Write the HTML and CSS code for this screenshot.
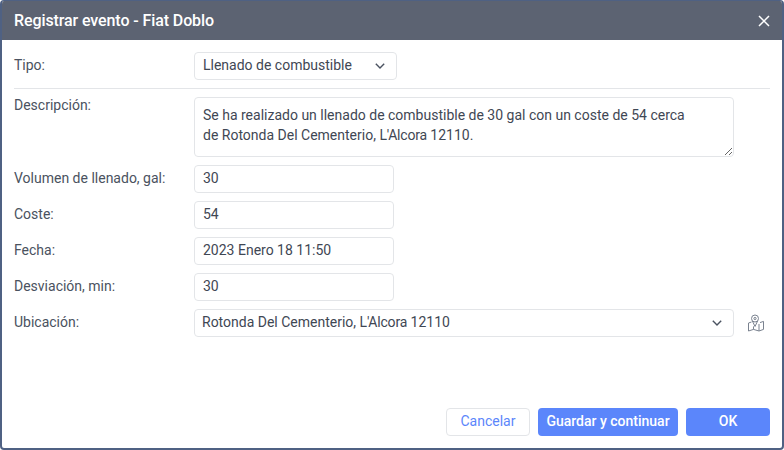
FILE: index.html
```html
<!DOCTYPE html>
<html lang="es">
<head>
<meta charset="utf-8">
<title>Registrar evento</title>
<link rel="stylesheet" href="styles.css">
</head>
<body>
<div class="dialog">
  <header class="head">
    <span class="title">Registrar evento - Fiat Doblo</span>
    <svg class="close" width="12" height="12" viewBox="0 0 12 12"><path d="M1 1l10 10M11 1L1 11" stroke="#fff" stroke-width="1.5" fill="none"/></svg>
  </header>
  <div class="body">
    <div class="row type-row">
      <label class="lab">Tipo:</label>
      <div class="field select type-select"><span>Llenado de combustible</span>
        <svg class="chev" width="10" height="6" viewBox="0 0 10 6"><path d="M.8.8L5 5l4.2-4.2" stroke="#4a5260" stroke-width="1.4" fill="none"/></svg>
      </div>
    </div>
    <hr class="sep">
    <div class="rows">
      <div class="row desc-row">
        <label class="lab">Descripción:</label>
        <div class="field area">
          <div>Se ha realizado un llenado de combustible de 30 gal con un coste de 54 cerca</div>
          <div>de Rotonda Del Cementerio, <span class="kern">L'Alcora</span> 12110.</div>
        </div>
      </div>
      <div class="row"><label class="lab">Volumen de llenado, gal:</label><input class="field input" value="30"></div>
      <div class="row"><label class="lab">Coste:</label><input class="field input" value="54"></div>
      <div class="row"><label class="lab">Fecha:</label><input class="field input" value="2023 Enero 18 11:50"></div>
      <div class="row"><label class="lab">Desviación, min:</label><input class="field input" value="30"></div>
      <div class="row">
        <label class="lab">Ubicación:</label>
        <div class="field select loc-select"><span>Rotonda Del Cementerio, <span class="kern">L'Alcora</span> 12110</span>
          <svg class="chev" width="10" height="6" viewBox="0 0 10 6"><path d="M.8.8L5 5l4.2-4.2" stroke="#4a5260" stroke-width="1.4" fill="none"/></svg>
        </div>
        <svg class="map" width="18" height="18" viewBox="0 0 18 18" fill="none" stroke="#7a828f" stroke-width="1">
          <circle cx="8" cy="4.500" r="3.500"/><circle cx="8" cy="4.500" r="1.100"/>
          <path d="M5.400 7L8 12.500 10.600 7"/>
          <path d="M4.500 8L1.500 9v8l5-1.600 5.500 1.600 4.500-1.600V7.400l-3.500 1.200M6.500 15.400v-3M12 17V10"/>
        </svg>
      </div>
    </div>
    <footer class="foot">
      <button class="btn ghost">Cancelar</button>
      <button class="btn primary save">Guardar y continuar</button>
      <button class="btn primary ok">OK</button>
    </footer>
  </div>
</div>
</body>
</html>
```
FILE: styles.css
```css
* { box-sizing: border-box; }
html, body { margin: 0; height: 100%; }
body { font-family: Roboto, "Liberation Sans", sans-serif; font-size: 14px; color: #4a5260; background: #fff; overflow: hidden; }
.dialog { width: 784px; height: 450px; display: flex; flex-direction: column; border: 2px solid #4f6183; border-top-width: 1px; border-radius: 4px; overflow: hidden; background: #fff; }
.head { height: 39px; flex: none; background: #5c6372; color: #fff; display: flex; align-items: center; justify-content: space-between; padding: 0 12px 1px 12px; }
.close { margin-top: 1px; }
.title { font-size: 16px; font-weight: 500; letter-spacing: -0.1px; }
.body { flex: 1; display: flex; flex-direction: column; padding: 12px; min-height: 0; }
.row { display: flex; height: 28px; align-items: center; }
.lab { width: 180px; flex: none; color: #4a5260; padding-bottom: 2px; }
.field { border: 1px solid #e3e5e8; border-radius: 4px; background: #fff; font: 14px Roboto, "Liberation Sans", sans-serif; color: #3f4754; outline: none; }
.kern { letter-spacing: -0.2px; }
.select { height: 28px; display: flex; align-items: center; justify-content: space-between; }
.select > span { margin-top: -2px; }
.type-select { width: 203px; padding: 0 11px 0 8px; }
.loc-select { width: 540px; padding: 0 11px 0 7px; }
.sep { border: 0; border-top: 1px solid #e3e5e8; margin: 8px 0; height: 0; }
.rows { display: flex; flex-direction: column; gap: 8px; }
.desc-row { height: 60px; align-items: flex-start; }
.desc-row .lab { padding: 0; }
.area { width: 540px; height: 60px; padding: 7px 8px 8px; line-height: 20px; resize: both; overflow: hidden; }
.input { width: 200px; height: 28px; padding: 0 8px 2px; }
.map { margin-left: 13px; flex: none; }
.foot { margin-top: auto; display: flex; justify-content: flex-end; gap: 8px; }
.btn { height: 28px; border-radius: 4px; font: 500 14px Roboto, "Liberation Sans", sans-serif; padding: 0 0 2px; cursor: pointer; }
.ghost { width: 84px; background: #fff; border: 1px solid #e3e5e8; color: #5b86fb; font-weight: 400; }
.primary { background: #5b86fb; border: 0; color: #fff; }
.save { width: 140px; }
.ok { width: 84px; }
```
